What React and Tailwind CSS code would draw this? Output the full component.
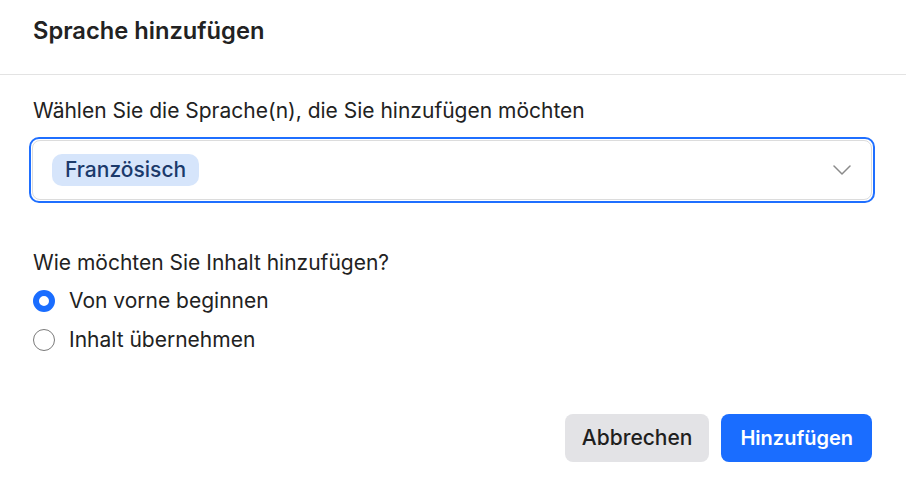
import React from "react";

export default function App() {
  return (
    <div className="w-[906px] h-[486px] bg-white text-[#1f1f1f] overflow-hidden" style={{ fontFamily: "Inter, 'Noto Sans', sans-serif" }}>
      <div className="h-[75px] border-b border-[#e3e3e3] px-[33px] pt-[16px]">
        <h1 className="text-[23.7px] leading-[30px] font-semibold text-[#222]">Sprache hinzufügen</h1>
      </div>
      <div className="pl-[29px] pr-[31px] pt-[21px]">
        <p className="pl-[4px] text-[21px] leading-[30px] text-[#222]">Wählen Sie die Sprache(n), die Sie hinzufügen möchten</p>
        <div className="mt-[11px] h-[66px] rounded-[10px] border-2 border-[#1f6fff] p-px">
          <div className="h-full rounded-[8px] border border-[#dcdcdc] flex items-center pl-[19px] pr-[20px]">
            <span className="h-[32px] px-[13px] rounded-[10px] bg-[#d6e5fb] text-[#1b3a6b] text-[21px] font-medium flex items-center">Französisch</span>
            <div className="ml-auto">
              <svg width="18" height="10" viewBox="0 0 18 10" fill="none">
                <path d="M1 1l8 8 8-8" stroke="#8a8a8a" strokeWidth="1.5" strokeLinecap="round" strokeLinejoin="round" />
              </svg>
            </div>
          </div>
        </div>
        <p className="mt-[45px] pl-[4px] text-[21px] leading-[30px] text-[#222]">Wie möchten Sie Inhalt hinzufügen?</p>
        <div className="mt-[8px] flex flex-col gap-[9px] pl-[4px]">
          <label className="flex items-center gap-[14px] text-[21px] leading-[30px] text-[#222]">
            <span className="w-[22px] h-[22px] rounded-full border-[6px] border-[#1a6dff] bg-white" />
            Von vorne beginnen
          </label>
          <label className="flex items-center gap-[14px] text-[21px] leading-[30px] text-[#222]">
            <span className="w-[22px] h-[22px] rounded-full border border-[#7a7a7a] bg-white" />
            Inhalt übernehmen
          </label>
        </div>
        <div className="mt-[59px] flex justify-end gap-[12px] pr-[3px]">
          <button className="h-[48px] px-[17px] rounded-[8px] bg-[#e3e3e6] text-[21px] font-medium text-[#1f1f1f]">Abbrechen</button>
          <button className="h-[48px] px-[19px] rounded-[8px] bg-[#1a6dff] text-[20px] font-semibold text-white">Hinzufügen</button>
        </div>
      </div>
    </div>
  );
}
